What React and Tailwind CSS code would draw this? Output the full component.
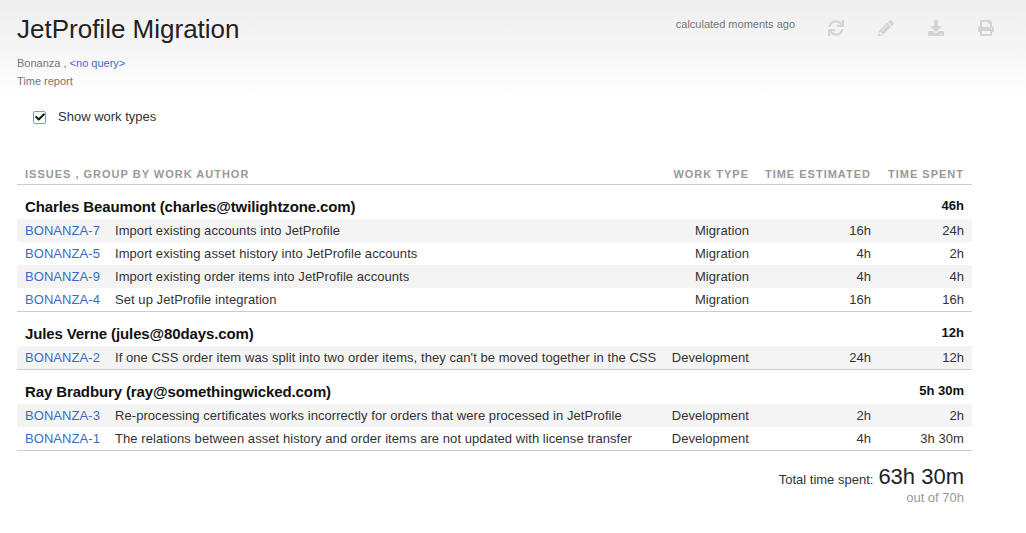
import React from "react";
import { FaSync, FaPencilAlt, FaDownload, FaPrint, FaCheck } from "react-icons/fa";

const groups = [
  {
    name: "Charles Beaumont (charles@twilightzone.com)",
    total: "46h",
    rows: [
      ["BONANZA-7", "Import existing accounts into JetProfile", "Migration", "16h", "24h"],
      ["BONANZA-5", "Import existing asset history into JetProfile accounts", "Migration", "4h", "2h"],
      ["BONANZA-9", "Import existing order items into JetProfile accounts", "Migration", "4h", "4h"],
      ["BONANZA-4", "Set up JetProfile integration", "Migration", "16h", "16h"],
    ],
  },
  {
    name: "Jules Verne (jules@80days.com)",
    total: "12h",
    rows: [
      ["BONANZA-2", "If one CSS order item was split into two order items, they can't be moved together in the CSS", "Development", "24h", "12h"],
    ],
  },
  {
    name: "Ray Bradbury (ray@somethingwicked.com)",
    total: "5h 30m",
    rows: [
      ["BONANZA-3", "Re-processing certificates works incorrectly for orders that were processed in JetProfile", "Development", "2h", "2h"],
      ["BONANZA-1", "The relations between asset history and order items are not updated with license transfer", "Development", "4h", "3h 30m"],
    ],
  },
];

const cols = "grid grid-cols-[98px_634px_122px_101px]";

export default function App() {
  return (
    <div className="h-[533px] w-[1026px] bg-white font-['Liberation_Sans',Arial,sans-serif] text-[#222]">
      <div className="h-[100px] bg-gradient-to-b from-[#eeeeee] to-white px-[17px] pt-[14px]">
        <div className="flex items-start justify-between">
          <h1 className="text-[26px] leading-[30px] text-[#222]">JetProfile Migration</h1>
          <div className="flex items-start">
            <span className="mt-[3px] text-[11px] leading-[14px] text-[#777]">calculated moments ago</span>
            <div className="ml-[33px] mr-[15px] mt-[6px] flex gap-[34px] text-[#d4d4d4]">
              <FaSync className="h-[16px] w-[16px]" />
              <FaPencilAlt className="h-[16px] w-[16px]" />
              <FaDownload className="h-[16px] w-[16px]" />
              <FaPrint className="h-[16px] w-[16px]" />
            </div>
          </div>
        </div>
        <div className="mt-[12px] text-[11px] leading-[14px] text-[#777]">
          Bonanza , <a className="text-[#4a68c4]">&lt;no query&gt;</a>
        </div>
        <div className="mt-[4px] text-[11px] leading-[14px] text-[#777]">Time report</div>
      </div>

      <label className="ml-[33px] mt-[9px] flex h-[16px] items-center text-[13px] text-[#333]">
        <span className="flex h-[13px] w-[13px] items-center justify-center rounded-[2px] border-[1.5px] border-[#38b6f5] bg-white">
          <FaCheck className="h-[10px] w-[10px] text-[#111]" />
        </span>
        <span className="ml-[12px]">Show work types</span>
      </label>

      <div className="ml-[17px] mt-[41px] w-[955px]">
        <div className={`${cols} h-[19px] border-b border-[#cccccc] pt-[1px] text-[11px] font-bold leading-[14px] tracking-[1px] text-[#999]`}>
          <div className="col-span-2 flex justify-between">
            <span className="pl-[8px]">ISSUES , GROUP BY WORK AUTHOR</span>
            <span>WORK TYPE</span>
          </div>
          <div className="text-right">TIME ESTIMATED</div>
          <div className="pr-[8px] text-right">TIME SPENT</div>
        </div>
        {groups.map((g) => (
          <div key={g.name} className="border-b border-[#cccccc]">
            <div className="flex h-[34px] items-end justify-between px-[8px] pb-[2px]">
              <span className="text-[15px] font-bold leading-[20px] tracking-[-0.12px] text-[#111]">{g.name}</span>
              <span className="relative top-[-1px] text-[13px] font-bold leading-[20px] text-[#111]">{g.total}</span>
            </div>
            {g.rows.map((r) => (
              <div key={r[0]} className={`${cols} h-[23px] text-[13px] leading-[23px] tracking-[0.06px] text-[#333] even:bg-[#f4f4f4]`}>
                <a className="pl-[8px] text-[#3b6cc4]">{r[0]}</a>
                <div className="flex justify-between whitespace-nowrap">
                  <span>{r[1]}</span>
                  <span>{r[2]}</span>
                </div>
                <div className="text-right">{r[3]}</div>
                <div className="pr-[8px] text-right">{r[4]}</div>
              </div>
            ))}
          </div>
        ))}
        <div className="pr-[8px] pt-[12px] text-right">
          <div className="flex items-baseline justify-end text-[13px] leading-[28px] text-[#333]">
            Total time spent:<span className="ml-[5px] text-[22px] text-[#222]">63h 30m</span>
          </div>
          <div className="mt-[-3px] text-[13px] leading-[13px] text-[#999]">out of 70h</div>
        </div>
      </div>
    </div>
  );
}
